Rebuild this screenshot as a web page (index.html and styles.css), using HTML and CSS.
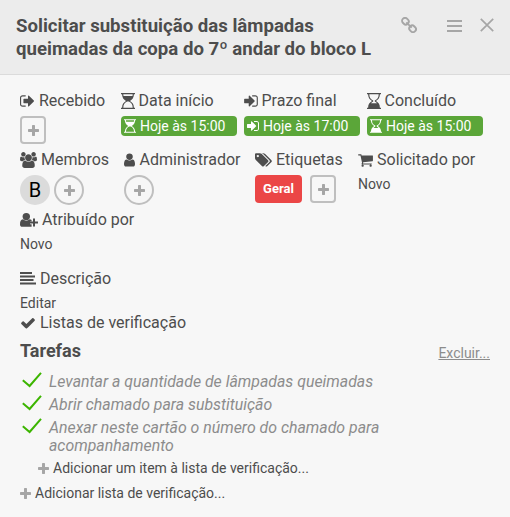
FILE: index.html
```html
<!DOCTYPE html>
<html lang="pt-BR">
<head>
<meta charset="utf-8">
<title>Cartão</title>
<link rel="stylesheet" href="styles.css">
</head>
<body>
<svg class="defs" width="0" height="0">
  <symbol id="plus" viewBox="192 128 1408 1408"><path d="M1600 736v192q0 40-28 68t-68 28h-416v416q0 40-28 68t-68 28h-192q-40 0-68-28t-28-68v-416h-416q-40 0-68-28t-28-68v-192q0-40 28-68t68-28h416v-416q0-40 28-68t68-28h192q40 0 68 28t28 68v416h416q40 0 68 28t28 68z"/></symbol>
  <symbol id="sign-in" viewBox="128 0 1536 1792"><path d="M1312 896q0 26-19 45l-544 544q-19 19-45 19t-45-19-19-45v-288h-448q-26 0-45-19t-19-45v-384q0-26 19-45t45-19h448v-288q0-26 19-45t45-19 45 19l544 544q19 19 19 45zm352-352v704q0 119-84.500 203.500t-203.500 84.500h-320q-13 0-22.500-9.500t-9.500-22.500q0-4-1-20t-.5-26.500 3-23.500 10-19.500 20.500-6.500h320q66 0 113-47t47-113v-704q0-66-47-113t-113-47h-312l-11.500-1-11.500-3-8-5.500-7-9-2-13.500q0-4-1-20t-.5-26.500 3-23.500 10-19.500 20.500-6.500h320q119 0 203.500 84.500t84.500 203.500z"/></symbol>
  <symbol id="hourglass-start" viewBox="0 0 14 16"><path d="M0 0h14v1.300h-1.100c0 3.600-1.600 5.300-3.900 6.700 2.300 1.400 3.900 3.100 3.900 6.700h1.100V16H0v-1.300h1.100C1.100 11.100 2.700 9.400 5 8 2.700 6.600 1.100 4.900 1.100 1.300H0zM2.300 1.300c0 .6.100 1.100.2 1.600h9c.1-.5.200-1 .2-1.600zM6.100 8.500c-2.300 1.200-3.800 2.800-3.800 6.200h9.400c0-3.400-1.500-5-3.800-6.200z" fill-rule="evenodd"/></symbol>
  <symbol id="hourglass-end" viewBox="0 0 14 16"><path d="M0 0h14v1.300h-1.100c0 3.600-1.600 5.300-3.900 6.700 2.300 1.400 3.900 3.100 3.900 6.700h1.100V16H0v-1.300h1.100C1.100 11.100 2.700 9.400 5 8 2.700 6.600 1.100 4.900 1.100 1.300H0zM2.300 1.300c0 3.500 1.500 5 3.900 6.200v1c-.9.500-1.600 1-2.200 1.700h6c-.6-.7-1.300-1.200-2.200-1.700v-1c2.400-1.200 3.900-2.700 3.900-6.200z" fill-rule="evenodd"/></symbol>
  <symbol id="tick" viewBox="0 0 20 16"><path d="M.8 8.300 7.600 14 19 .8" fill="none" stroke="#3cb500" stroke-width="2"/></symbol>
</svg>

<header class="header">
  <h2 class="title">Solicitar substituição das lâmpadas queimadas da copa do 7º andar do bloco L</h2>
  <div class="actions">
    <svg class="link" viewBox="0 0 16 16"><g fill="none" stroke="#a6a6a6" stroke-width="1.900"><rect x="1" y="1.300" width="6.800" height="5.800" rx="2.700" transform="rotate(45 4.400 4.200)"/><rect x="8.200" y="8.900" width="6.800" height="5.800" rx="2.700" transform="rotate(45 11.600 11.800)"/><path d="m5.300 5.300 5.400 5.400"/></g></svg>
    <svg class="bars" viewBox="0 0 15 12"><path d="M0 0h15v2H0zM0 5h15v2H0zM0 10h15v2H0z"/></svg>
    <svg class="close" viewBox="0 0 14 14"><path d="m.8.8 12.400 12.400M13.200.8.8 13.200" fill="none" stroke="#a6a6a6" stroke-width="1.700"/></svg>
  </div>
</header>

<main class="card">
  <div class="row dates">
    <section><h3><svg class="i14" viewBox="64 0 1568 1792"><path d="M704 1440q0 4 1 20t.5 26.500-3 23.500-10 19.500-20.500 6.500h-320q-119 0-203.500-84.500t-84.500-203.500v-704q0-119 84.500-203.500t203.500-84.500h320q13 0 22.500 9.500t9.500 22.500q0 4 1 20t.5 26.500-3 23.500-10 19.500-20.500 6.500h-320q-66 0-113 47t-47 113v704q0 66 47 113t113 47h312l11.500 1 11.500 3 8 5.500 7 9 2 13.500zm928-544q0 26-19 45l-544 544q-19 19-45 19t-45-19-19-45v-288h-448q-26 0-45-19t-19-45v-384q0-26 19-45t45-19h448v-288q0-26 19-45t45-19 45 19l544 544q19 19 19 45z"/></svg>Recebido</h3>
      <a class="add"><svg><use href="#plus"/></svg></a></section>
    <section><h3><svg class="i14 glass"><use href="#hourglass-start"/></svg>Data início</h3>
      <a class="date"><svg><use href="#hourglass-start"/></svg>Hoje às 15:00</a></section>
    <section><h3><svg class="i14 glass"><use href="#sign-in"/></svg>Prazo final</h3>
      <a class="date"><svg><use href="#sign-in"/></svg>Hoje às 17:00</a></section>
    <section><h3><svg class="i14 glass"><use href="#hourglass-end"/></svg>Concluído</h3>
      <a class="date"><svg><use href="#hourglass-end"/></svg>Hoje às 15:00</a></section>
  </div>

  <div class="row people">
    <section><h3><svg class="i17" viewBox="-64 0 1920 1792"><path d="M529 896q-162 5-265 128h-134q-82 0-138-40.500t-56-118.500q0-353 124-353 6 0 43.500 21t97.500 42.500 119 21.500q67 0 133-23-5 37-5 66 0 139 81 256zm1071 637q0 120-73 189.500t-194 69.500h-874q-121 0-194-69.500t-73-189.500q0-53 3.500-103.500t14-109 26.500-108.500 43-97.500 62-81 85.500-53.500 111.500-20q10 0 43 21.500t73 48 107 48 135 21.500 135-21.500 107-48 73-48 43-21.500q61 0 111.500 20t85.500 53.500 62 81 43 97.500 26.500 108.500 14 109 3.500 103.500zm-1024-1277q0 106-75 181t-181 75-181-75-75-181 75-181 181-75 181 75 75 181zm704 384q0 159-112.500 271.500t-271.500 112.500-271.500-112.500-112.500-271.500 112.500-271.500 271.500-112.500 271.500 112.500 112.500 271.500zm576 225q0 78-56 118.500t-138 40.500h-134q-103-123-265-128 81-117 81-256 0-29-5-66 66 23 133 23 59 0 119-21.500t97.500-42.500 43.500-21q124 0 124 353zm-128-609q0 106-75 181t-181 75-181-75-75-181 75-181 181-75 181 75 75 181z"/></svg>Membros</h3>
      <div class="members"><span class="avatar">B</span><a class="add round"><svg><use href="#plus"/></svg></a></div></section>
    <section><h3><svg class="i11" viewBox="256 0 1280 1792"><path d="M1536 1399q0 109-62.500 187t-150.500 78h-854q-88 0-150.500-78t-62.500-187q0-85 8.500-160.500t31.500-152 58.500-131 94-89 134.500-34.500q131 128 313 128t313-128q76 0 134.500 34.500t94 89 58.500 131 31.500 152 8.500 160.500zm-256-887q0 159-112.500 271.500t-271.500 112.500-271.500-112.500-112.500-271.500 112.500-271.500 271.500-112.500 271.500 112.500 112.500 271.500z"/></svg>Administrador</h3>
      <a class="add round"><svg><use href="#plus"/></svg></a></section>
    <section><h3><svg class="i17" viewBox="-64 0 1920 1792"><path d="M384 448q0-53-37.500-90.500t-90.500-37.500-90.500 37.500-37.500 90.500 37.500 90.500 90.500 37.500 90.500-37.500 37.500-90.500zm1067 576q0 53-37 90l-491 492q-39 37-91 37-53 0-90-37l-715-716q-38-37-64.500-101t-26.500-117v-416q0-52 38-90t90-38h416q53 0 117 26.500t102 64.500l715 714q37 39 37 91zm384 0q0 53-37 90l-491 492q-39 37-91 37-36 0-59-14t-53-45l470-470q37-37 37-90 0-52-37-91l-715-714q-38-38-102-64.500t-117-26.500h224q53 0 117 26.500t102 64.500l715 714q37 39 37 91z"/></svg>Etiquetas</h3>
      <div class="labels"><span class="label">Geral</span><a class="add"><svg><use href="#plus"/></svg></a></div></section>
    <section><h3><svg class="i15" viewBox="64 0 1664 1792"><path d="M704 1536q0 52-38 90t-90 38-90-38-38-90 38-90 90-38 90 38 38 90zm896 0q0 52-38 90t-90 38-90-38-38-90 38-90 90-38 90 38 38 90zm128-1088v512q0 24-16.500 42.500t-40.500 21.500l-1044 122q13 60 13 70 0 16-24 64h920q26 0 45 19t19 45-19 45-45 19h-1024q-26 0-45-19t-19-45q0-11 8-31.500t16-36 21.500-40 15.500-29.500l-177-823h-204q-26 0-45-19t-19-45 19-45 45-19h256q16 0 28.500 6.500t19.500 15.500 13 24.500 8 26 5.500 29.500 4.500 26h1201q26 0 45 19t19 45z"/></svg>Solicitado por</h3>
      <p>Novo</p></section>
  </div>

  <section class="assigned"><h3><svg class="i18" viewBox="0 0 18 16"><circle cx="6.300" cy="4.600" r="3.700"/><path d="M3 7.300c2 1.900 4.600 1.900 6.600 0 .8 0 1.500.3 2 .8v1.200H10v3h1.600v2.500H2.300C.9 14.800 0 13.800 0 12.400 0 9.500.8 7.300 3 7.300zM13 6.500h2v3h3v2h-3v3h-2v-3h-3v-2h3z"/></svg>Atribuído por</h3>
    <p>Novo</p></section>

  <section class="description"><h3><svg class="i16" viewBox="0 0 16 16"><path d="M0 1h12v2H0zM0 4.500h15v2H0zM0 8h13.500v2H0zM0 11.500h16v2H0z"/></svg>Descrição</h3>
    <p>Editar</p></section>

  <section class="checklists">
    <h3><svg class="i16" viewBox="0 0 1792 1792"><path d="M1671 566q0 40-28 68l-724 724-136 136q-28 28-68 28t-68-28l-136-136-362-362q-28-28-28-68t28-68l136-136q28-28 68-28t68 28l294 295 656-657q28-28 68-28t68 28l136 136q28 28 28 68z"/></svg>Listas de verificação</h3>
    <div class="checklist-head"><h2>Tarefas</h2><a>Excluir...</a></div>
    <ul>
      <li><svg><use href="#tick"/></svg><span>Levantar a quantidade de lâmpadas queimadas</span></li>
      <li><svg><use href="#tick"/></svg><span>Abrir chamado para substituição</span></li>
      <li><svg><use href="#tick"/></svg><span>Anexar neste cartão o número do chamado para acompanhamento</span></li>
    </ul>
    <a class="add-line nested"><svg><use href="#plus"/></svg>Adicionar um item à lista de verificação...</a>
    <a class="add-line"><svg><use href="#plus"/></svg>Adicionar lista de verificação...</a>
  </section>
</main>
</body>
</html>
```
FILE: styles.css
```css
* { box-sizing: border-box; }
body {
  margin: 0;
  height: 517px;
  overflow: hidden;
  background: #f7f7f7;
  color: #4d4d4d;
  font: 14px/18px Roboto, "Liberation Sans", sans-serif;
}
svg { display: block; flex: none; fill: currentColor; }
.defs { position: absolute; }
h2, h3, p, ul { margin: 0; padding: 0; }
h2 { font-size: 18px; font-weight: 700; }
h3 { display: flex; align-items: center; height: 20px; font-size: 16px; font-weight: 400; white-space: nowrap; }
h3 svg { height: 16px; margin-right: 4px; }
.i11 { width: 11px; }
.i14 { width: 14px; }
.i15 { width: 15px; }
.i16 { width: 16px; }
.i17 { width: 17px; }
.i18 { width: 18px; }
h3 .i14 { margin-right: 5px; }
h3 .i11 { margin-right: 4.500px; }
h3 .glass { margin-right: 3.500px; }

.header {
  display: flex;
  justify-content: space-between;
  height: 75px;
  padding: 15px 16px 0 16px;
  background: #ececec;
  border-bottom: 1px solid #dbdbdb;
}
.title { width: 365px; font-size: 18.620px; line-height: 23px; }
.actions { display: flex; align-items: flex-start; color: #a6a6a6; }
.link { width: 16px; height: 16px; margin: 2px 30px 0 0; }
.bars { width: 15px; height: 12px; margin: 5px 18px 0 0; }
.close { width: 14px; height: 14px; margin-top: 3px; }

.card { padding: 16px 20px 0; }
.row { display: grid; height: 59px; }
.dates { grid-template-columns: 101px 123px 123px 117px; }
.people { grid-template-columns: 104px 131px 103px 120px; }
section p { margin-top: 5px; }
.add {
  display: flex;
  align-items: center;
  justify-content: center;
  width: 26px;
  height: 28px;
  margin-top: 5px;
  border: 2px solid #bfbfbf;
  border-radius: 4px;
  color: #a6a6a6;
}
.add svg, .add-line svg { width: 11px; height: 11px; }
.round { width: 30px; height: 30px; border-radius: 50%; }
.date {
  display: flex;
  align-items: center;
  width: 116px;
  height: 20px;
  margin-top: 5px;
  padding-left: 3px;
  border-radius: 4px;
  background: #5ba639;
  color: #fff;
}
.date svg { width: 12px; height: 14px; margin-right: 4px; }
.members { display: flex; gap: 4px; }
.avatar {
  width: 30px;
  height: 30px;
  margin-top: 5px;
  border-radius: 50%;
  background: #dbdbdb;
  color: #000;
  font-size: 20px;
  line-height: 30px;
  text-align: center;
}
.labels { display: flex; gap: 8px; }
.label {
  width: 47px;
  height: 28px;
  margin-top: 5px;
  border-radius: 4px;
  background: #eb4646;
  color: #fff;
  font-size: 13px;
  font-weight: 700;
  line-height: 28px;
  text-align: center;
}
.assigned { height: 60px; padding-top: 1px; }
.description { height: 44px; }
.checklist-head { display: flex; justify-content: space-between; height: 39px; padding-top: 9px; }
.checklist-head a { padding-top: 2px; color: #8c8c8c; text-decoration: underline; }
ul { list-style: none; }
li { display: flex; margin-bottom: 5px; color: #8c8c8c; font-size: 15.870px; font-style: italic; line-height: 18px; }
li svg { width: 20px; height: 16px; margin: 0 7px 0 2px; }
li span { width: 350px; padding-top: 1px; margin-bottom: -1px; }
.add-line { display: flex; align-items: center; height: 18px; margin-top: 7px; }
.add-line svg { margin-right: 4px; color: #a6a6a6; }
.nested { margin: 0 0 0 18px; }
```
